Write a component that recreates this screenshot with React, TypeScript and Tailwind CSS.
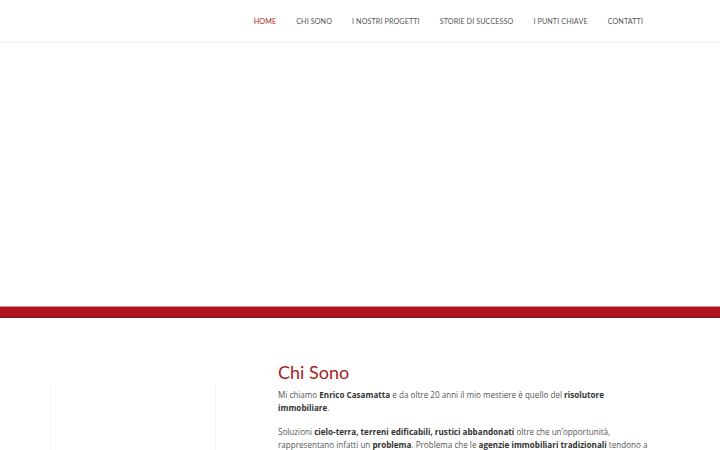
import React from "react";

const navItems = [
  "Home",
  "Chi sono",
  "I nostri progetti",
  "Storie di successo",
  "I punti chiave",
  "Contatti",
];

const Header = () => {
  return (
    <header className="h-[42px] bg-white border-b border-[#f2f2f2] shadow-[0_1px_2px_rgba(0,0,0,0.03)] flex items-center justify-end pr-[77px] pt-[3px]">
      <nav className="flex items-center gap-[20px] font-['Lato',sans-serif] text-[7.2px] tracking-[0.1px] uppercase">
        {navItems.map((item, i) => (
          <a
            key={item}
            href="#"
            className={i === 0 ? "text-[#a51c22]" : "text-[#555]"}
          >
            {item}
          </a>
        ))}
      </nav>
    </header>
  );
};

const Band = () => (
  <div className="h-[12px] bg-[#b0171d] border-t border-[#d88b8e] border-b-2 border-b-[#951418]" />
);

const About = () => {
  return (
    <section className="flex gap-[62px] pl-[50px] pt-[44px] h-[132px] overflow-hidden">
      <div className="w-[166px] h-[80px] mt-[21px] shrink-0 border-x border-[#f6f6f6]" />
      <div className="w-[374px] font-['Open_Sans',sans-serif] text-[8.1px] leading-[13px] text-[#555]">
        <h2 className="font-['Lato',sans-serif] text-[18px] leading-[20px] text-[#a51c22] mb-[6px]">
          Chi Sono
        </h2>
        <p className="mb-[11px]">
          Mi chiamo <b className="text-[#333]">Enrico Casamatta</b> e da oltre
          20 anni il mio mestiere è quello del{" "}
          <b className="text-[#333]">risolutore immobiliare</b>.
        </p>
        <p>
          Soluzioni{" "}
          <b className="text-[#333]">
            cielo-terra, terreni edificabili, rustici abbandonati
          </b>{" "}
          oltre che un’opportunità, rappresentano infatti un{" "}
          <b className="text-[#333]">problema</b>. Problema che le{" "}
          <b className="text-[#333]">agenzie immobiliari tradizionali</b>{" "}
          tendono a
        </p>
      </div>
    </section>
  );
};

export default function App() {
  return (
    <div className="w-[720px] h-[450px] overflow-hidden bg-white">
      <Header />
      <div className="h-[264px]" />
      <Band />
      <About />
    </div>
  );
}
